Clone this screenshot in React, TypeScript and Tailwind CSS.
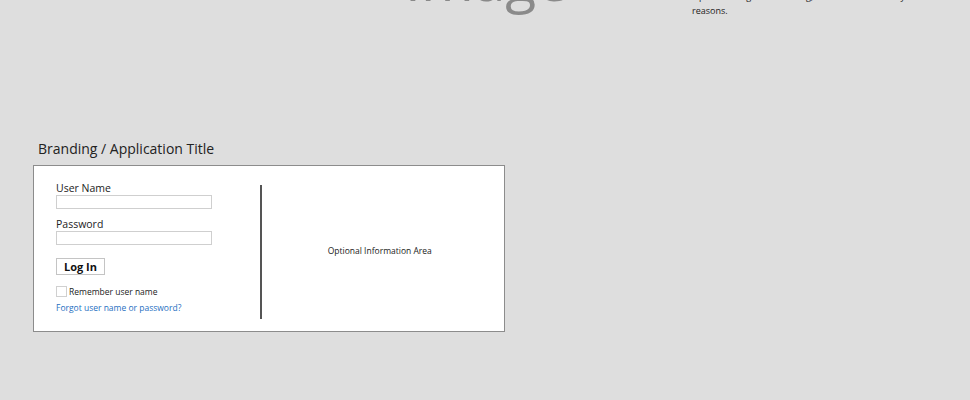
import React from "react";

export default function App() {
  return (
    <div
      className="w-[970px] h-[400px] overflow-hidden bg-[#dedede] text-[#222]"
      style={{ fontFamily: '"Open Sans", "Noto Sans", sans-serif' }}
    >
      {/* Header row (scrolled partly out of view) */}
      <div className="flex items-start mt-[-48px] h-[68px]">
        <div className="w-[405px]" />
        <div className="text-[57px] leading-[58px] text-[#8a8a8a] w-[287px] mt-[-2px]">Image</div>
        <div className="w-[275px] text-[9px] leading-[14px] text-[#222] mt-[38px]">
          <p className="whitespace-nowrap">Optional image for branding, remove it for security</p>
          <p>reasons.</p>
        </div>
      </div>

      <div className="pl-[38px] mt-[119px] text-[14px] leading-[20px] text-[#222]">
        Branding / Application Title
      </div>

      <div className="ml-[33px] mt-[6px] w-[472px] h-[167px] bg-white border-[1.5px] border-[#8c8c8c] flex">
        <div className="w-[226px] pl-[22px] pt-[15px] flex flex-col">
          <label className="text-[10.5px] leading-[14px]">User Name</label>
          <div className="w-[156px] h-[14px] border border-[#cfcfcf] bg-white" />
          <label className="text-[10.5px] leading-[14px] mt-[8px]">Password</label>
          <div className="w-[156px] h-[14px] border border-[#cfcfcf] bg-white" />
          <button className="mt-[13px] w-[49px] h-[17px] border border-[#c4c4c4] bg-white text-[11px] leading-[15px] font-bold text-[#111] flex items-center justify-center">
            Log In
          </button>
          <div className="flex items-center mt-[11px]">
            <div className="w-[11px] h-[11px] border border-[#d0d0d0] bg-white" />
            <span className="ml-[2px] text-[8.5px] leading-[11px] text-[#222]">Remember user name</span>
          </div>
          <a className="mt-[5px] text-[8.5px] leading-[11px] text-[#1f6fbf]">Forgot user name or password?</a>
        </div>
        <div className="w-[1.5px] h-[134px] mt-[19px] bg-[#555]" />
        <div className="flex-1 flex items-center justify-center pr-[6px] pt-[6px] text-[8.5px] text-[#222]">
          Optional Information Area
        </div>
      </div>
    </div>
  );
}
